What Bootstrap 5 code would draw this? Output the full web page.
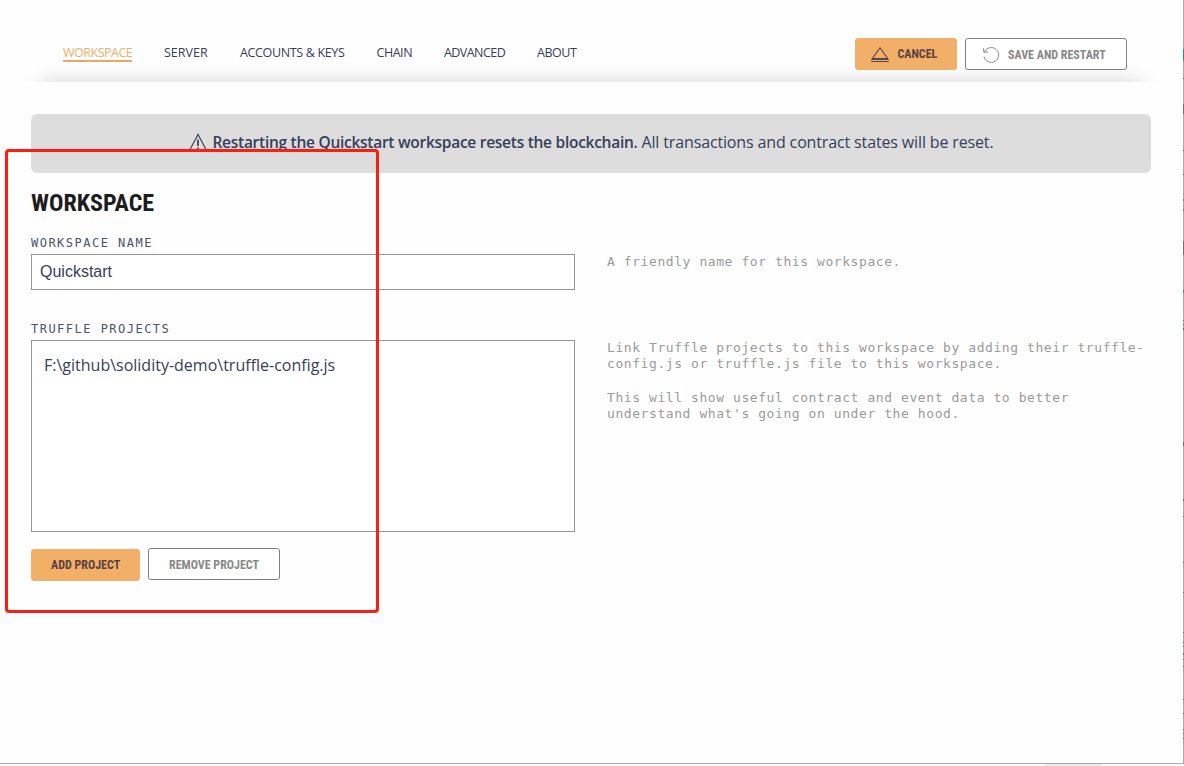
<!DOCTYPE html>
<html lang="en">
<head>
<meta charset="utf-8">
<title>Workspace</title>
<link rel="stylesheet" href="https://cdn.jsdelivr.net/npm/bootstrap@5.3.0/dist/css/bootstrap.min.css">
<style>
body{font-family:"Open Sans",sans-serif;color:#35405a;background:#fefefe;overflow:hidden}
.app-window{height:764px;border-right:1px solid #a9a9a9;border-bottom:1px solid #a9a9a9}
.app-header{height:82px;padding:38px 56px 0 63px;overflow:hidden}
.app-header::after{content:"";position:absolute;left:41px;right:41px;top:82px;height:60px;box-shadow:0 0 20px rgba(0,0,0,.16)}
.app-header>*{z-index:1}
.tabs{gap:32px;font-size:12.5px;letter-spacing:-.46px;line-height:18px;padding-top:6px}
.tabs a{color:inherit;text-decoration:none;white-space:nowrap;height:18px}
.tabs a.active{color:#edb069;border-bottom:2px solid #e9a964}
.tabs .w1{width:69px;letter-spacing:-.5px}.tabs .w2{width:44px;letter-spacing:0}.tabs .w3{width:104.5px;letter-spacing:-.35px}.tabs .w4{width:35.5px}.tabs .w5{width:61px;letter-spacing:-.56px}
.action{font:700 12px/30px "Roboto Condensed",sans-serif;height:32px;border-radius:3px;padding:0 20px;border:1px solid #808080;color:#888;background:#fff;white-space:nowrap}
.action.primary{background:#f2af67;color:#5b4145;border-color:#f2af67}
.action svg{flex:none}
.notice{height:59px;margin:32px 32px 0 31px;background:#ddd;border-radius:6px;font-size:16px;letter-spacing:-.14px;line-height:24px;padding-bottom:4px}
.notice svg{margin-top:1px}
.notice b{font-size:15.5px;font-weight:600;letter-spacing:-.27px;width:425px;white-space:nowrap}
.settings{padding:0 32px 0 31px}
.settings h4{font:700 24px/28px "Roboto Condensed",sans-serif;color:#1d1d1d;margin:16px 0 18px}
.field-label{font:12px/16px "DejaVu Sans Mono",monospace;letter-spacing:1.48px;margin-bottom:3px;white-space:nowrap;color:#4a546b}
.setting{gap:32px}
.setting>.field{width:544px;flex:none}
.field input,.project-list{border:1px solid #969696;border-radius:0;background:#fff;color:inherit;display:block;width:100%}
.field input{height:36px;padding:0 8px;font:16px "Liberation Sans",sans-serif;outline:0}
.project-list{height:192px;padding:12px;font-size:16px;line-height:25px}
.hint{font:13px/16px "DejaVu Sans Mono",monospace;letter-spacing:.574px;color:#9a9a9a;padding-top:19px}
.hint p{margin:0 0 18px}
.highlight{position:absolute;left:5px;top:149px;width:374px;height:464px;border:3px solid #ff1d12;border-radius:4px}
.edge{position:absolute;left:1183px;top:0;width:1px;height:763px}
.scroll-stub{position:absolute;left:1045px;top:764px;width:57px;height:2px;background:#ececec}
</style>
</head>
<body>
<div class="app-window position-relative">
  <header class="app-header position-relative d-flex justify-content-between">
    <nav class="tabs d-flex position-relative">
      <a class="active w1" href="#">WORKSPACE</a><a class="w2" href="#">SERVER</a><a class="w3" href="#">ACCOUNTS &amp; KEYS</a><a class="w4" href="#">CHAIN</a><a class="w5" href="#">ADVANCED</a><a href="#">ABOUT</a>
    </nav>
    <div class="d-flex gap-2 position-relative">
      <button class="action primary d-flex" style="width:102px;padding-left:15px">
        <svg class="mt-2" width="18" height="16" fill="none" stroke="currentColor"><path d="M9 .8 16.6 11.5H1.4Z" stroke-width="1.1"/><path d="M.2 12.5H17.8M.2 14.5H17.8"/></svg><span style="margin-left:8.5px">CANCEL</span>
      </button>
      <button class="action d-flex" style="width:162px;padding-left:17px">
        <svg style="margin-top:8px" width="17" height="17" fill="none" stroke="currentColor"><path d="M1.5 4.9A7.4 7.4 0 1 1 1 9.5M.7 1V5.1H4.9"/></svg><span style="margin-left:8px;padding-top:1px">SAVE AND RESTART</span>
      </button>
    </div>
  </header>
  <div class="notice d-flex justify-content-center align-items-center">
    <svg width="20" height="19" class="me-1" fill="none" stroke="currentColor" stroke-width="1.2"><path d="M10 1.5 19 18.3H1Z"/><path d="M10 6.5V13M10 14.5V16.3" stroke-width="1.7"/></svg>
    <b>Restarting the Quickstart workspace resets the blockchain.</b><span class="ms-1 text-nowrap">All transactions and contract states will be reset.</span>
  </div>
  <main class="settings">
    <h4>WORKSPACE</h4>
    <section class="setting d-flex">
      <div class="field"><div class="field-label">WORKSPACE NAME</div><input type="text" value="Quickstart"></div>
      <div class="hint"><p>A friendly name for this workspace.</p></div>
    </section>
    <section class="setting d-flex" style="margin-top:31px">
      <div class="field">
        <div class="field-label">TRUFFLE PROJECTS</div>
        <div class="project-list">F:\github\solidity-demo\truffle-config.js</div>
        <div class="d-flex gap-2 mt-3">
          <button class="action primary" style="width:109px;margin-top:1px;padding:0 20px 0 19px">ADD PROJECT</button>
          <button class="action" style="width:132px"><span class="d-block" style="padding-top:1px">REMOVE PROJECT</span></button>
        </div>
      </div>
      <div class="hint text-nowrap"><p>Link Truffle projects to this workspace by adding their truffle-<br>config.js or truffle.js file to this workspace.</p><p>This will show useful contract and event data to better<br>understand what's going on under the hood.</p></div>
    </section>
  </main>
  <div class="highlight"></div>
  <svg class="edge" viewBox="0 0 1 763" preserveAspectRatio="none" fill="none"><path stroke="#2789a8" d="M.5 49V61M.5 290v3"/><path stroke="#6a6c9c" d="M.5 104V114M.5 241V255M.5 199v2M.5 209v2M.5 442v4"/><path stroke="#4f7390" d="M.5 78v1M.5 150v1M.5 174v1M.5 320v1M.5 324v1M.5 328v2M.5 499v2M.5 516v1M.5 562v1M.5 592v1M.5 632v1M.5 642v1M.5 646v1M.5 653v2M.5 659v1M.5 666v1M.5 699v1M.5 713v1M.5 729v1M.5 733v1M.5 738v1"/></svg>
</div>
<div class="scroll-stub"></div>
<script src="https://cdn.jsdelivr.net/npm/bootstrap@5.3.0/dist/js/bootstrap.bundle.min.js"></script>
</body>
</html>
